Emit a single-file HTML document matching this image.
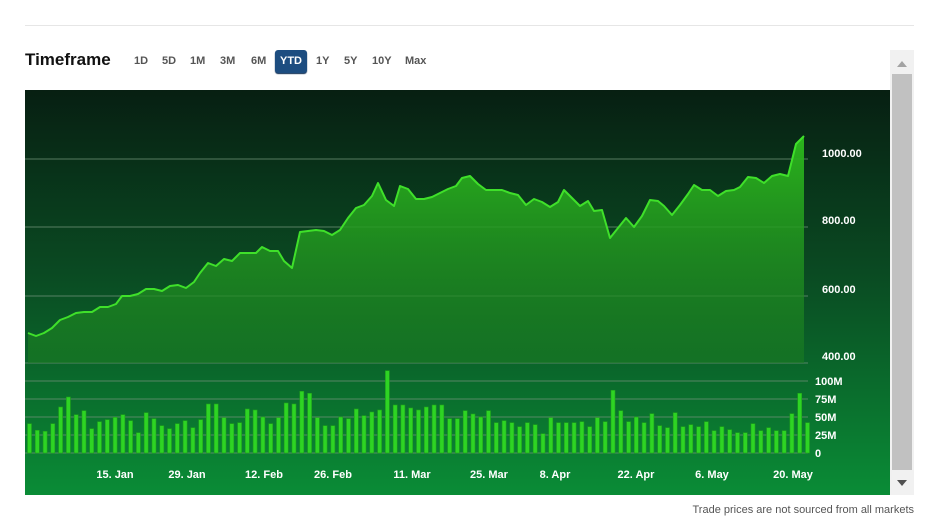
<!DOCTYPE html>
<html><head><meta charset="utf-8"><style>
body{margin:0;width:931px;height:523px;background:#fff;font-family:"Liberation Sans",sans-serif;position:relative;overflow:hidden}
.top{position:absolute;left:25px;top:25px;width:889px;height:1px;background:#e6e6e6}
.title{position:absolute;left:25px;top:50px;font-size:17px;font-weight:bold;color:#111}
.tf{position:absolute;top:55px;font-size:11px;font-weight:bold;color:#555}
.ytd{position:absolute;left:275px;top:50px;width:32px;height:23px;background:#1d4d80;border-radius:3px;color:#fff;font-size:11px;font-weight:bold;text-align:center;line-height:22px;box-shadow:0 1px 1px #0a2a50}
.foot{position:absolute;right:17px;top:504px;font-size:11px;color:#555}
</style></head><body>
<div class="top"></div>
<div class="title">Timeframe</div>
<div class="tf" style="left:134px">1D</div>
<div class="tf" style="left:162px">5D</div>
<div class="tf" style="left:190px">1M</div>
<div class="tf" style="left:220px">3M</div>
<div class="tf" style="left:251px">6M</div>
<div class="ytd">YTD</div>
<div class="tf" style="left:316px">1Y</div>
<div class="tf" style="left:344px">5Y</div>
<div class="tf" style="left:372px">10Y</div>
<div class="tf" style="left:405px">Max</div>
<svg style="position:absolute;left:0;top:0" width="931" height="523">
<defs>
<linearGradient id="bg" x1="0" y1="0" x2="0" y2="1"><stop offset="0" stop-color="#071f12"/><stop offset="0.45" stop-color="#0a4a22"/><stop offset="1" stop-color="#0a8c36"/></linearGradient>
<linearGradient id="ar" x1="0" y1="0" x2="0" y2="1"><stop offset="0" stop-color="#2bb51c"/><stop offset="1" stop-color="#1a7a22" stop-opacity="0.6"/></linearGradient>
</defs>
<rect x="25" y="90" width="865" height="405" fill="url(#bg)"/>
<g stroke="#6a8e74" stroke-width="1" opacity="0.8">
<line x1="25" y1="159" x2="808" y2="159"/><line x1="25" y1="227" x2="808" y2="227"/><line x1="25" y1="296" x2="808" y2="296"/><line x1="25" y1="363" x2="808" y2="363"/>
<line x1="25" y1="381" x2="808" y2="381"/><line x1="25" y1="399" x2="808" y2="399"/><line x1="25" y1="417" x2="808" y2="417"/><line x1="25" y1="435" x2="808" y2="435"/><line x1="25" y1="453" x2="808" y2="453"/>
</g>
<polygon id="area" fill="url(#ar)" points=""/>
<polyline id="line" fill="none" stroke="#3fe02a" stroke-width="2" stroke-linejoin="round" points=""/>
<g id="bars" fill="#2ed424" stroke="#1fa31a" stroke-width="0.6"></g>
<g fill="#fff" font-size="11" font-weight="bold">
<text x="822" y="157">1000.00</text><text x="822" y="224">800.00</text><text x="822" y="293">600.00</text><text x="822" y="360">400.00</text>
<text x="815" y="385">100M</text><text x="815" y="403">75M</text><text x="815" y="421">50M</text><text x="815" y="439">25M</text><text x="815" y="457">0</text>
<g text-anchor="middle"><text x="115" y="478">15. Jan</text><text x="187" y="478">29. Jan</text><text x="264" y="478">12. Feb</text><text x="333" y="478">26. Feb</text><text x="412" y="478">11. Mar</text><text x="489" y="478">25. Mar</text><text x="555" y="478">8. Apr</text><text x="636" y="478">22. Apr</text><text x="712" y="478">6. May</text><text x="793" y="478">20. May</text></g>
</g>
<rect x="890" y="50" width="24" height="445" fill="#f1f1f1"/>
<rect x="892" y="74" width="20" height="396" fill="#c1c1c1"/>
<polygon points="897,67 907,67 902,61" fill="#a3a3a3"/>
<polygon points="897,480 907,480 902,486" fill="#505050"/>
</svg>
<div class="foot">Trade prices are not sourced from all markets</div>
<script>
var p="28,333 36,336 44,333 52,328 60,320 68,317 76,313 84,312 92,312 100,307 108,307 116,304 122,296 130,296 138,294 146,289 154,289 162,291 170,286 178,285 186,288 194,282 200,273 208,263 216,266 224,259 232,261 240,253 248,253 256,253 262,247 270,251 278,251 284,261 292,268 300,232 308,231 316,230 324,231 332,235 340,230 348,218 356,208 364,205 372,196 378,183 386,200 394,206 400,186 408,189 416,199 424,199 432,197 440,193 448,189 456,186 462,178 470,176 478,184 486,190 494,190 502,190 510,193 518,195 526,205 534,199 542,202 550,207 558,202 564,190 572,198 580,206 588,201 594,211 602,210 610,238 618,228 626,218 634,227 642,216 650,200 658,201 664,206 672,215 680,205 688,194 694,185 702,190 710,190 718,196 726,191 734,190 740,187 748,177 756,178 764,183 772,176 780,174 788,176 796,144 804,136";
document.getElementById('line').setAttribute('points',p);
document.getElementById('area').setAttribute('points',p+" 804,363 28,363");
var t=[192,212,215,192,142,112,165,153,207,186,180,173,165,183,219,159,177,198,207,192,183,204,180,133,133,174,192,189,148,151,172,192,174,130,133,95,101,174,198,198,172,177,148,168,157,151,33,136,136,145,151,142,136,136,177,177,153,163,172,153,189,183,189,201,189,195,222,174,189,189,189,186,201,174,186,92,153,186,172,189,162,198,204,159,201,195,201,186,213,201,210,219,219,192,213,204,213,213,162,101,189];
var s="";for(var i=0;i<t.length;i++){var h=(280-t[i])/3;s+='<rect x="'+(27.5+i*7.78).toFixed(1)+'" y="'+(453-h).toFixed(1)+'" width="4" height="'+h.toFixed(1)+'"/>';}
document.getElementById('bars').innerHTML=s;
</script>
</body></html>
